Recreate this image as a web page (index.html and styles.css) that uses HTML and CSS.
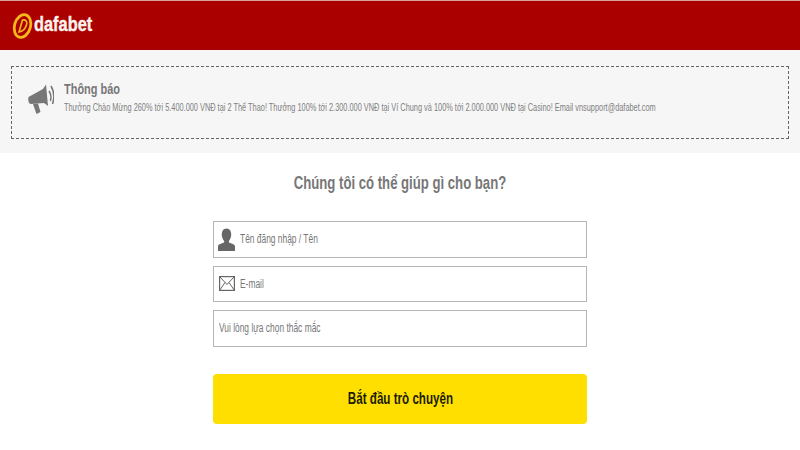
FILE: index.html
```html
<!DOCTYPE html>
<html lang="vi">
<head>
    <meta charset="UTF-8">
    <meta name="viewport" content="width=device-width, initial-scale=1.0">
    <title>Dafabet</title>
    <link rel="stylesheet" href="styles.css">
</head>
<body>

    <header class="top-bar">
        <svg class="logo-mark" width="21" height="28" viewBox="0 0 21 28">
            <ellipse cx="10.5" cy="14" rx="8" ry="11.6" fill="none" stroke="#f7b81c" stroke-width="2.8" transform="rotate(16 10.5 14)"/>
            <path d="M7 20 L10.5 8 C14 7.5 15.5 9.5 14.6 12.5 C13.5 16.5 11 19.5 7 20 Z" fill="none" stroke="#f7b81c" stroke-width="1.6"/>
        </svg>
        <span class="logo-text">dafabet</span>
    </header>

    <section class="notice-wrap">
        <div class="notice">
            <svg class="notice-icon" width="27" height="32" viewBox="0 0 27 32">
                <path d="M1.5 14 L16 6 L19 1.5 L21 23 L17 20 L4 21 C1.5 21 0.8 17 1.5 14 Z" fill="#777"/>
                <path d="M6 21 L11 20.5 L13.5 29 L9.5 31 Z" fill="#777"/>
                <path d="M22 8 C24 11 24.5 14 23.5 18" fill="none" stroke="#777" stroke-width="1.5"/>
                <path d="M24 3 C27 8 27.5 15 25.5 21" fill="none" stroke="#777" stroke-width="1.5"/>
            </svg>
            <div class="notice-body">
                <h2>Thông báo</h2>
                <p>Thưởng Chào Mừng 260% tới 5.400.000 VNĐ tại 2 Thể Thao! Thưởng 100% tới 2.300.000 VNĐ tại Ví Chung và 100% tới 2.000.000 VNĐ tại Casino! Email vnsupport@dafabet.com</p>
            </div>
        </div>
    </section>

    <main class="chat-form">
        <h1>Chúng tôi có thể giúp gì cho bạn?</h1>

        <div class="field">
            <svg class="field-icon" width="17" height="23" viewBox="0 0 18 24" preserveAspectRatio="none">
                <path d="M9 0.5 C12.5 0.5 14 3.5 14 7 C14 10 12.5 12.5 11.5 13.5 L11.5 15 C14 16 17.5 16.5 18 19 L18 24 L0 24 L0 19 C0.5 16.5 4 16 6.5 15 L6.5 13.5 C5.5 12.5 4 10 4 7 C4 3.5 5.5 0.5 9 0.5 Z" fill="#666"/>
            </svg>
            <span class="field-label">Tên đăng nhập / Tên</span>
        </div>

        <div class="field">
            <svg class="field-icon" width="17" height="15" viewBox="0 0 17 15">
                <rect x="1.6" y="0.6" width="14.8" height="13.8" fill="none" stroke="#666" stroke-width="1.2"/>
                <path d="M1.6 0.6 L9 8.5 L16.4 0.6 M1.6 14.4 L7 6.5 M16.4 14.4 L11 6.5" fill="none" stroke="#666" stroke-width="1"/>
            </svg>
            <span class="field-label">E-mail</span>
        </div>

        <div class="field">
            <span class="field-label field-label-plain">Vui lòng lựa chọn thắc mắc</span>
        </div>

        <button type="button" class="start-btn"><span>Bắt đầu trò chuyện</span></button>
    </main>

</body>
</html>
```

FILE: styles.css
```css
body {
    font-family: "Liberation Sans", Arial, sans-serif;
    margin: 0;
    background-color: #ffffff;
    color: #777777;
}
.top-bar {
    height: 49px;
    border-top: 1px solid #d9a0a0;
    background-color: #ab0000;
    display: flex;
    align-items: center;
    padding-left: 12px;
}
.logo-mark {
    flex-shrink: 0;
    margin-right: 1px;
}
.logo-text {
    color: #fdf3ee;
    font-size: 21px;
    font-weight: bold;
    -webkit-text-stroke: 0.4px #fdf3ee;
    margin-top: -3px;
    transform: scaleX(0.78);
    transform-origin: left center;
}
.notice-wrap {
    background-color: #f6f6f6;
    height: 103px;
    padding: 16px 11px 0;
    box-sizing: border-box;
}
.notice {
    height: 73px;
    border: 1px dashed #666666;
    box-sizing: border-box;
    display: flex;
    align-items: flex-start;
    padding: 14px 0 0 15px;
}
.notice-icon {
    flex-shrink: 0;
    margin-right: 10px;
    margin-top: 2px;
}
.notice-body h2 {
    margin: 0;
    font-size: 15px;
    line-height: 16px;
    color: #777777;
    transform: scaleX(0.73);
    transform-origin: left center;
}
.notice-body p {
    margin: 3px 0 0;
    font-size: 7.38px;
    line-height: 15px;
    color: #808080;
    white-space: nowrap;
    transform: scaleY(1.36);
}
.chat-form {
    width: 374px;
    margin: 0 auto;
    display: flex;
    flex-direction: column;
}
.chat-form h1 {
    margin: 20px 0 27px;
    font-size: 18px;
    line-height: 21px;
    text-align: center;
    color: #777777;
    white-space: nowrap;
    transform: scaleX(0.73);
}
.field {
    height: 36.6px;
    border: 1px solid #b5b5b5;
    box-sizing: border-box;
    display: flex;
    align-items: center;
    padding-left: 4px;
    margin-bottom: 8px;
}
.field-icon {
    flex-shrink: 0;
    margin-right: 5px;
}
.field-label {
    font-size: 12px;
    color: #777777;
    transform: scaleX(0.7);
    transform-origin: left center;
}
.field-label-plain {
    margin-left: 1px;
}
.start-btn {
    height: 50px;
    margin-top: 19.2px;
    background-color: #ffdf00;
    border: none;
    border-radius: 4px;
    font-family: inherit;
    font-size: 16px;
    font-weight: bold;
    color: #1c1c00;
}
.start-btn span {
    display: inline-block;
    transform: scaleX(0.726);
}
```
